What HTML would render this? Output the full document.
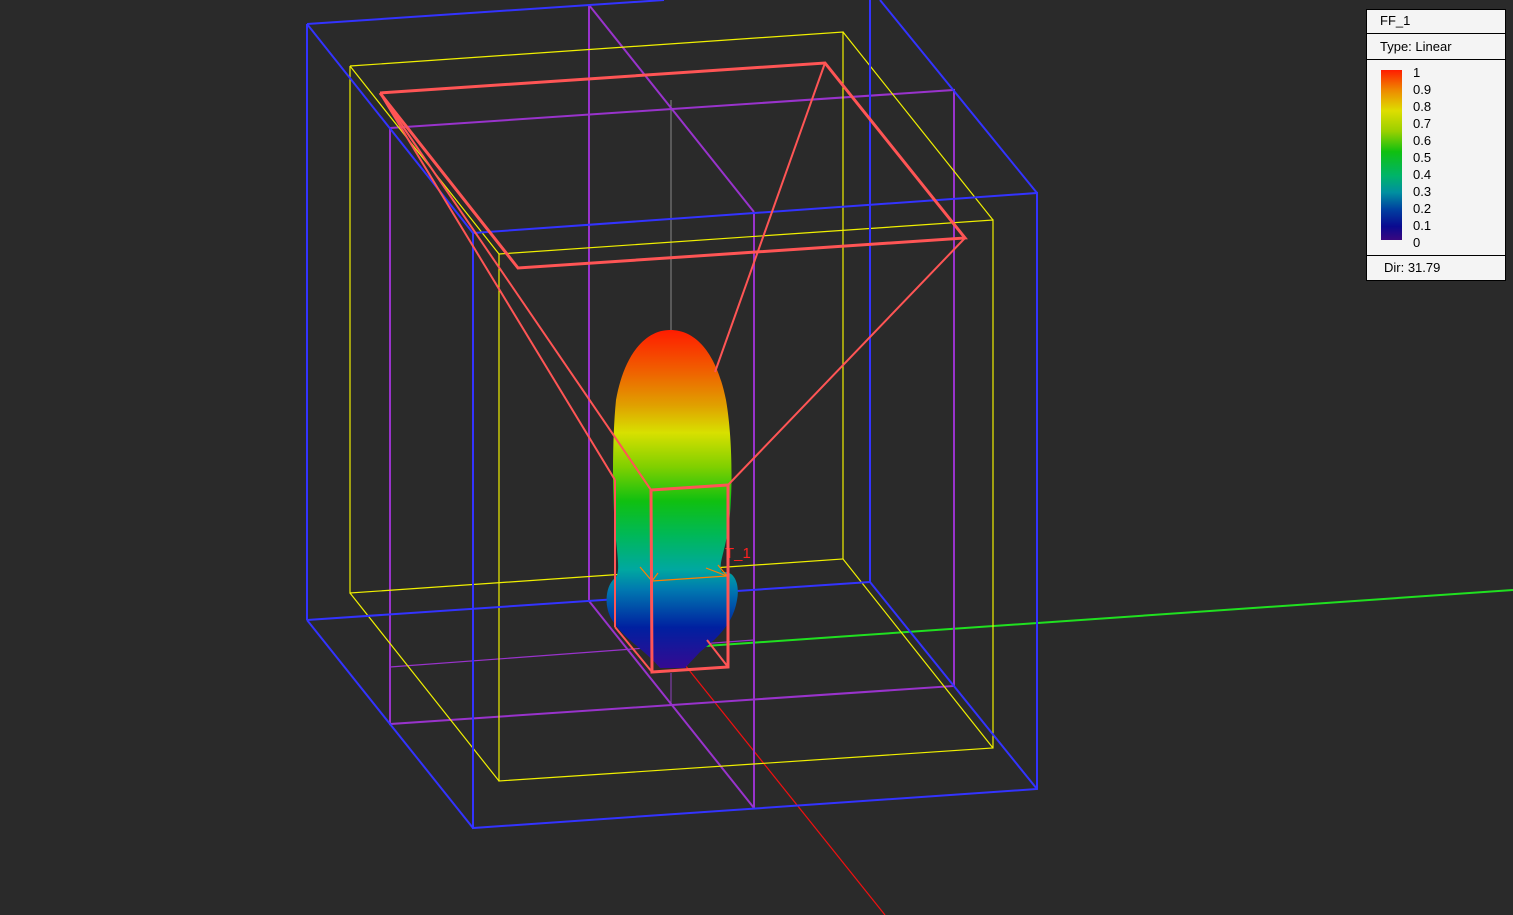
<!DOCTYPE html>
<html><head><meta charset="utf-8"><style>
html,body{margin:0;padding:0;background:#2a2a2a;width:1513px;height:915px;overflow:hidden;font-family:"Liberation Sans",sans-serif}
svg{position:absolute;left:0;top:0}
.leg{position:absolute;left:1366px;top:9px;width:138px;height:270px;background:#f4f4f4;border:1px solid #000;font-size:13px;color:#000}
.leg .r{position:absolute;left:0;right:0;border-bottom:1px solid #000}
.bar{position:absolute;left:14px;top:60px;width:21px;height:170px;background:linear-gradient(#ff1c00,#ee8a00 12%,#dede00 24%,#9ad000 36%,#10c010 48%,#00b468 62%,#0090a0 72%,#0040a0 82%,#0a0a90 92%,#3a0880)}
.nums{position:absolute;left:46px;top:54px;line-height:17px;font-size:13px}
</style></head><body>
<svg width="1513" height="915" viewBox="0 0 1513 915">
<defs>
<linearGradient id="g" x1="0" y1="330" x2="0" y2="672" gradientUnits="userSpaceOnUse">
<stop offset="0" stop-color="#ff1c00"/><stop offset="0.12" stop-color="#f06000"/>
<stop offset="0.22" stop-color="#e0a000"/><stop offset="0.3" stop-color="#d8e000"/>
<stop offset="0.4" stop-color="#80d000"/><stop offset="0.5" stop-color="#10c010"/>
<stop offset="0.6" stop-color="#00b858"/><stop offset="0.7" stop-color="#00a8a0"/>
<stop offset="0.76" stop-color="#0078b0"/><stop offset="0.87" stop-color="#0020a0"/>
<stop offset="1" stop-color="#3a0890"/></linearGradient>
</defs>
<g fill="none">
<line x1="671" y1="100" x2="671" y2="330" stroke="#888" stroke-width="1"/>
<line x1="691" y1="647" x2="1513" y2="590" stroke="#20e020" stroke-width="2"/>
<line x1="673" y1="650" x2="885" y2="915" stroke="#f01010" stroke-width="1.2"/>
<line x1="671" y1="673" x2="671" y2="703" stroke="#9040c0" stroke-width="1"/>
<g stroke="#9933cc" stroke-width="2">
<polyline points="390,128 954,90 954,686 390,724 390,128"/>
<line x1="589" y1="5" x2="589" y2="601"/>
<line x1="754" y1="212" x2="754" y2="808"/>
<line x1="589" y1="5" x2="754" y2="212"/>
<line x1="589" y1="601" x2="754" y2="808"/>
</g>
<line x1="390" y1="667" x2="754" y2="640" stroke="#9933cc" stroke-width="1.2"/>
<g stroke="#f0f000" stroke-width="1.2">
<polyline points="350,66 843,32 843,559 350,593 350,66"/>
<polyline points="499,254 993,220 993,748 499,781 499,254"/>
<line x1="350" y1="66" x2="499" y2="254"/><line x1="843" y1="32" x2="993" y2="220"/>
<line x1="350" y1="593" x2="499" y2="781"/><line x1="843" y1="559" x2="993" y2="748"/>
</g>
<g stroke="#3333ff" stroke-width="2">
<line x1="307" y1="24" x2="664" y2="0"/>
<line x1="307" y1="24" x2="307" y2="620"/>
<line x1="307" y1="620" x2="870" y2="582"/>
<line x1="870" y1="0" x2="870" y2="582"/>
<line x1="307" y1="24" x2="473" y2="233"/>
<line x1="307" y1="620" x2="473" y2="828"/>
<line x1="880" y1="0" x2="1037" y2="193"/>
<line x1="870" y1="582" x2="1037" y2="789"/>
<polyline points="473,233 1037,193 1037,789 473,828 473,233"/>
</g>
<path d="M670,330 C700,330 718,360 726,400 C733,440 733,500 728,530 C724,555 718,565 722,572 C735,570 740,585 737,600 C733,625 715,640 700,652 L685,668 L660,668 C645,650 625,640 612,620 C603,605 606,585 615,578 C620,574 618,560 616,540 C612,500 612,440 616,400 C624,355 645,330 670,330 Z" fill="url(#g)"/>
<g stroke="#ff8000" stroke-width="1.2">
<line x1="652" y1="581" x2="727" y2="576"/>
<line x1="640" y1="567" x2="652" y2="581"/><line x1="658" y1="573" x2="652" y2="581"/>
<line x1="706" y1="568" x2="727" y2="576"/><line x1="718" y1="565" x2="727" y2="576"/>
</g>
<text x="725" y="558" fill="#ff2020" font-size="15" font-family="Liberation Sans">T_1</text>
<g stroke="#ff5555" stroke-width="3">
<polyline points="380,93 825,63 965,238 518,268 380,93"/>
</g>
<g stroke="#ff5555" stroke-width="2">
<line x1="380" y1="93" x2="651" y2="490"/>
<line x1="380" y1="93" x2="615" y2="480"/>
<line x1="825" y1="63" x2="715" y2="372"/>
<line x1="965" y1="238" x2="728" y2="485"/>
<line x1="615" y1="480" x2="615" y2="627"/>
<line x1="615" y1="627" x2="652" y2="672"/>
<line x1="707" y1="640" x2="728" y2="667"/>
</g>
<g stroke="#ff5555" stroke-width="3">
<polyline points="651,490 728,485 728,667 652,672 651,490"/>
</g>
</g>
</svg>
<div class="leg">
<div class="r" style="top:0;height:23px"><span style="position:absolute;left:13px;top:3px">FF_1</span></div>
<div class="r" style="top:24px;height:25px"><span style="position:absolute;left:13px;top:5px">Type: Linear</span></div>
<div class="bar"></div>
<div class="nums">1<br>0.9<br>0.8<br>0.7<br>0.6<br>0.5<br>0.4<br>0.3<br>0.2<br>0.1<br>0</div>
<div style="position:absolute;left:0;right:0;top:245px;border-top:1px solid #000"></div>
<span style="position:absolute;left:17px;top:250px">Dir: 31.79</span>
</div>
</body></html>
